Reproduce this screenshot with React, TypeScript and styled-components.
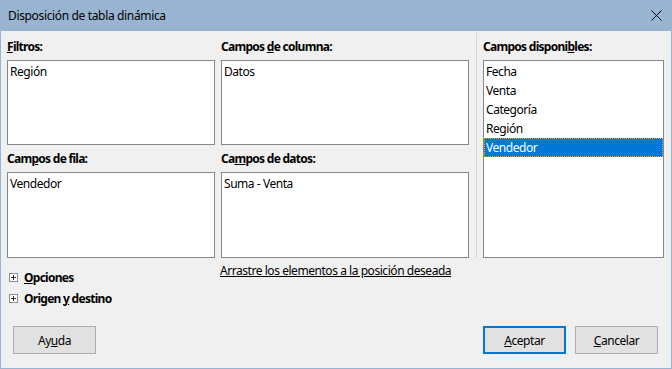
import React from 'react';
import styled, { createGlobalStyle } from 'styled-components';

const Global = createGlobalStyle`
  html, body { margin: 0; padding: 0; background: #f0f0f0; }
  * { box-sizing: border-box; }
`;

const font = `"Noto Sans", "Open Sans", sans-serif`;

const Window = styled.div`
  width: 672px;
  height: 369px;
  background: #99b4d1;
  padding: 0 1px 1px 1px;
  display: flex;
  flex-direction: column;
  font-family: ${font};
  font-size: 12px;
  letter-spacing: -0.45px;
  color: #000;
`;

const TitleBar = styled.div`
  height: 31px;
  flex: none;
  display: flex;
  align-items: center;
  justify-content: space-between;
  padding: 0 9px 0 7px;
`;

const Title = styled.span`
  font-size: 12px;
  line-height: 16px;
  letter-spacing: -0.35px;
`;

const Body = styled.div`
  flex: 1;
  background: #f0f0f0;
  display: flex;
  flex-direction: column;
`;

const Main = styled.div`
  display: flex;
  padding: 2px 6px 0 6px;
  height: 227px;
`;

const LeftGrid = styled.div`
  display: grid;
  grid-template-columns: 208px 248px;
  grid-template-rows: 106px 107px;
  column-gap: 6px;
  row-gap: 6px;
  padding-top: 6px;
  width: 462px;
`;

const Group = styled.div`
  display: flex;
  flex-direction: column;
  gap: 5px;
  min-height: 0;
`;

const Label = styled.div`
  font-weight: bold;
  letter-spacing: -0.72px;
  line-height: 16px;
  height: 16px;
  white-space: nowrap;
`;

const Box = styled.div`
  background: #fff;
  border: 1px solid #828790;
  flex: 1;
  display: flex;
  flex-direction: column;
  padding-top: 1px;
`;

const Item = styled.div<{ $sel?: boolean }>`
  height: 19px;
  line-height: 19px;
  padding-left: 2px;
  white-space: nowrap;
  background: ${p => (p.$sel ? '#0078d7' : 'transparent')};
  color: ${p => (p.$sel ? '#fff' : '#000')};
  outline: ${p => (p.$sel ? '1px dotted #f7a030' : 'none')};
  outline-offset: -1px;
`;

const Separator = styled.div`
  width: 1px;
  background: #d6d6d6;
  margin: 0 6px 0 7px;
  align-self: stretch;
`;

const RightCol = styled.div`
  display: flex;
  flex-direction: column;
  gap: 5px;
  padding-top: 6px;
  width: 181px;
`;

const Lower = styled.div`
  display: grid;
  grid-template-columns: 212px 248px;
  padding: 5px 0 0 6px;
`;

const Expanders = styled.div`
  display: flex;
  flex-direction: column;
  gap: 1px;
  padding-top: 4px;
  padding-left: 2px;
`;

const Expander = styled.div`
  display: flex;
  align-items: center;
  gap: 6px;
  height: 20px;
  font-weight: bold;
  letter-spacing: -0.72px;
`;

const PlusBox = styled.span`
  width: 9px;
  height: 9px;
  border: 1px solid #919191;
  background: #fff;
  position: relative;
  flex: none;
  &::before, &::after {
    content: '';
    position: absolute;
    background: #333;
  }
  &::before { left: 1px; top: 3px; width: 5px; height: 1px; }
  &::after { left: 3px; top: 1px; width: 1px; height: 5px; }
`;

const Hint = styled.div`
  line-height: 16px;
  text-decoration: underline;
  white-space: nowrap;
  padding-left: 1px;
`;

const Footer = styled.div`
  margin-top: auto;
  display: flex;
  align-items: center;
  padding: 0 13px 14px 12px;
`;

const Button = styled.button<{ $primary?: boolean }>`
  width: 83px;
  height: 28px;
  background: #e1e1e1;
  border: ${p => (p.$primary ? '2px solid #0078d7' : '1px solid #adadad')};
  font-family: ${font};
  font-size: 12px;
  letter-spacing: -0.45px;
  color: #000;
  padding: 0;
  margin: 0;
`;

const Spacer = styled.div`
  flex: 1;
`;

const ButtonGroup = styled.div`
  display: flex;
  gap: 9px;
`;

const U = styled.span`
  text-decoration: underline;
`;

const CloseIcon = () => (
  <svg width="11" height="11" viewBox="0 0 11 11">
    <path d="M0.5 0.5 L10.5 10.5 M10.5 0.5 L0.5 10.5" stroke="#000" strokeWidth="1" />
  </svg>
);

export default function App() {
  return (
    <>
      <Global />
      <Window>
        <TitleBar>
          <Title>Disposición de tabla dinámica</Title>
          <CloseIcon />
        </TitleBar>
        <Body>
          <Main>
            <LeftGrid>
              <Group>
                <Label><U>F</U>iltros:</Label>
                <Box>
                  <Item>Región</Item>
                </Box>
              </Group>
              <Group>
                <Label>Campos <U>d</U>e columna:</Label>
                <Box>
                  <Item>Datos</Item>
                </Box>
              </Group>
              <Group>
                <Label>Cam<U>p</U>os de fila:</Label>
                <Box>
                  <Item>Vendedor</Item>
                </Box>
              </Group>
              <Group>
                <Label>Ca<U>m</U>pos de datos:</Label>
                <Box>
                  <Item>Suma - Venta</Item>
                </Box>
              </Group>
            </LeftGrid>
            <Separator />
            <RightCol>
              <Label>Campos disponi<U>b</U>les:</Label>
              <Box>
                <Item>Fecha</Item>
                <Item>Venta</Item>
                <Item>Categoría</Item>
                <Item>Región</Item>
                <Item $sel>Vendedor</Item>
              </Box>
            </RightCol>
          </Main>
          <Lower>
            <Expanders>
              <Expander><PlusBox /><span><U>O</U>pciones</span></Expander>
              <Expander><PlusBox /><span>Origen <U>y</U> destino</span></Expander>
            </Expanders>
            <Hint>Arrastre los elementos a la posición deseada</Hint>
          </Lower>
          <Footer>
            <Button>Ay<U>u</U>da</Button>
            <Spacer />
            <ButtonGroup>
              <Button $primary><U>A</U>ceptar</Button>
              <Button><U>C</U>ancelar</Button>
            </ButtonGroup>
          </Footer>
        </Body>
      </Window>
    </>
  );
}
